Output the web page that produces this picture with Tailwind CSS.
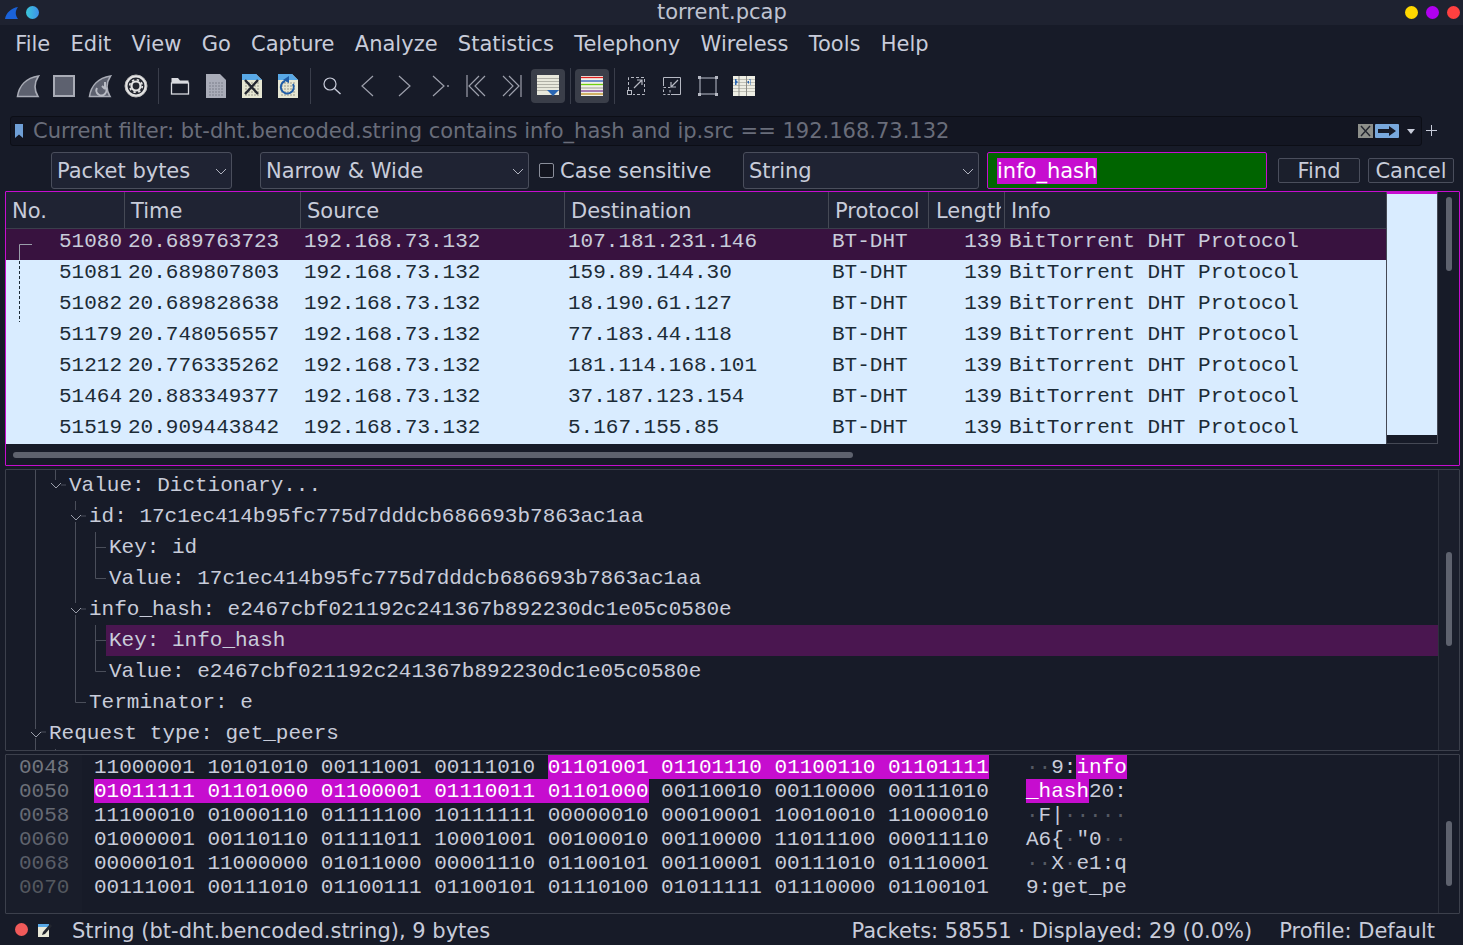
<!DOCTYPE html>
<html lang="en"><head><meta charset="utf-8"><title>torrent.pcap</title>
<script src="https://cdn.jsdelivr.net/npm/@tailwindcss/browser@4"></script></head>
<body class="m-0 w-[1463px] h-[945px] overflow-hidden bg-[#171b28] text-[#c8ccda] font-['DejaVu_Sans',sans-serif] text-[21px]">
<!-- title bar -->
<header class="relative h-[25px] flex items-center justify-between bg-[#1e2230] pl-[5px] pr-[3px]">
  <div class="flex items-center gap-[7px]">
    <svg width="14" height="14" viewBox="0 0 14 14"><path d="M0 13 C1 7 6 2 13 1 C10 5 10 9 13 13 Z" fill="#1a62d8"/></svg>
    <span class="w-[13px] h-[13px] rounded-full bg-gradient-to-r from-[#3bc7d9] to-[#3f8fe8]"></span>
  </div>
  <span class="absolute left-[657px] top-0 leading-[24px] text-[#bfc3d0]">torrent.pcap</span>
  <div class="flex items-center gap-[8px]">
    <span class="w-[13px] h-[13px] rounded-full bg-[#ffd800]"></span>
    <span class="w-[13px] h-[13px] rounded-full bg-[#b000f0]"></span>
    <span class="w-[13px] h-[13px] rounded-full bg-[#ff4040]"></span>
  </div>
</header>
<!-- menu -->
<nav class="h-[35px] flex items-center pl-[5px] pt-[3px] leading-[32px]">
  <span class="px-[10.15px]">File</span><span class="px-[10.15px]">Edit</span><span class="px-[10.15px]">View</span><span class="px-[10.15px]">Go</span><span class="px-[10.15px]">Capture</span><span class="px-[10.15px]">Analyze</span><span class="px-[10.15px]">Statistics</span><span class="px-[10.15px]">Telephony</span><span class="px-[10.15px]">Wireless</span><span class="px-[10.15px]">Tools</span><span class="px-[10.15px]">Help</span>
</nav>
<!-- toolbar -->
<div class="h-[52px] flex items-center pl-[10px]">
  <span class="w-9 h-9 flex items-center justify-center"><svg width="24" height="24" viewBox="0 0 24 24"><path d="M1.5 22.5 C3 12 10 4 22.5 2 C18 9 18 16 22 22.5 Z" fill="#5d616f" stroke="#a9acb6" stroke-width="1.6"/></svg></span>
  <span class="w-9 h-9 flex items-center justify-center"><svg width="24" height="24" viewBox="0 0 24 24"><rect x="2" y="2" width="20" height="20" fill="#5d616f" stroke="#a9acb6" stroke-width="2"/></svg></span>
  <span class="w-9 h-9 flex items-center justify-center"><svg width="24" height="24" viewBox="0 0 24 24"><path d="M1.5 22.5 C3 12 10 4 22.5 2 C18 9 18 16 22 22.5 Z" fill="#5d616f" stroke="#a9acb6" stroke-width="1.6"/><path d="M9 14 A5 5 0 1 0 17 13 M17 8 V15 M14 12 L17 15" fill="none" stroke="#b8bbc4" stroke-width="2"/></svg></span>
  <span class="w-9 h-9 flex items-center justify-center"><svg width="24" height="24" viewBox="0 0 24 24"><circle cx="12" cy="12" r="11" fill="#e4e4e4" stroke="#bbb"/><circle cx="12" cy="12" r="8.5" fill="#23262f"/><circle cx="12" cy="12" r="4.5" fill="none" stroke="#e4e4e4" stroke-width="2.2"/><circle cx="12" cy="12" r="6.3" fill="none" stroke="#e4e4e4" stroke-width="1.6" stroke-dasharray="2.4 2.55"/></svg></span>
  <span class="w-2 h-[36px] flex justify-center"><span class="w-px h-full bg-[#3a3e4b]"></span></span>
  <span class="w-9 h-9 flex items-center justify-center"><svg width="20" height="20" viewBox="0 0 20 20"><path d="M1.5 2 H8 L10 4.5 H18.5 V8 H1.5 Z" fill="#d9dbe0"/><rect x="1.5" y="7" width="17" height="11" fill="#171b28" stroke="#d9dbe0" stroke-width="1.3"/></svg></span>
  <span class="w-9 h-9 flex items-center justify-center"><svg width="20" height="24" viewBox="0 0 20 24"><path d="M0 0 H14 L20 6 V24 H0 Z" fill="#a9acb8"/><path d="M3 9 H17 M3 12 H17 M3 15 H17 M3 18 H17 M3 21 H17" stroke="#7d808c" stroke-dasharray="2 1"/></svg></span>
  <span class="w-9 h-9 flex items-center justify-center"><svg width="20" height="24" viewBox="0 0 20 24"><path d="M0 0 H14 L20 6 V24 H0 Z" fill="#e6e6d2"/><path d="M0 0 H14 L20 6 H0 Z" fill="#58a8e6"/><path d="M3 9 H17 M3 12 H17 M3 15 H17 M3 18 H17 M3 21 H17" stroke="#9a9a8c" stroke-dasharray="2 1"/><path d="M3 6 L16 20 M16 6 L3 20" stroke="#23262f" stroke-width="2.4"/></svg></span>
  <span class="w-9 h-9 flex items-center justify-center"><svg width="20" height="24" viewBox="0 0 20 24"><path d="M0 0 H14 L20 6 V24 H0 Z" fill="#e6e6d2"/><path d="M0 0 H14 L20 6 H0 Z" fill="#58a8e6"/><path d="M3 9 H17 M3 12 H17 M3 15 H17 M3 18 H17 M3 21 H17" stroke="#9a9a8c" stroke-dasharray="2 1"/><path d="M7 7 A6.5 6.5 0 1 0 15 10" fill="none" stroke="#1f5da8" stroke-width="2"/><path d="M11 2 V9 L5 6 Z" fill="#1f5da8"/></svg></span>
  <span class="w-2 h-[36px] flex justify-center"><span class="w-px h-full bg-[#3a3e4b]"></span></span>
  <span class="w-9 h-9 flex items-center justify-center"><svg width="20" height="20" viewBox="0 0 20 20"><circle cx="8" cy="8" r="6" fill="none" stroke="#c8ccda" stroke-width="1.2"/><path d="M12.5 12.5 L18.5 18" stroke="#c8ccda" stroke-width="1.4"/></svg></span>
  <span class="w-9 h-9 flex items-center justify-center"><svg width="20" height="24" viewBox="0 0 20 24"><path d="M15 2 L4 12 L15 22" fill="none" stroke="#9da0ac" stroke-width="1.2"/></svg></span>
  <span class="w-9 h-9 flex items-center justify-center"><svg width="20" height="24" viewBox="0 0 20 24"><path d="M5 2 L16 12 L5 22" fill="none" stroke="#9da0ac" stroke-width="1.2"/></svg></span>
  <span class="w-9 h-9 flex items-center justify-center"><svg width="20" height="24" viewBox="0 0 20 24"><path d="M3 2 L14 12 L3 22" fill="none" stroke="#9da0ac" stroke-width="1.2"/><circle cx="18" cy="12" r="0.9" fill="#9da0ac"/></svg></span>
  <span class="w-9 h-9 flex items-center justify-center"><svg width="20" height="24" viewBox="0 0 20 24"><path d="M1 1 V23 M13 2 L3 12 L13 22 M19 2 L9 12 L19 22" fill="none" stroke="#9da0ac" stroke-width="1.2"/></svg></span>
  <span class="w-9 h-9 flex items-center justify-center"><svg width="20" height="24" viewBox="0 0 20 24"><path d="M19 1 V23 M7 2 L17 12 L7 22 M1 2 L11 12 L1 22" fill="none" stroke="#9da0ac" stroke-width="1.2"/></svg></span>
  <span class="w-9 h-9 flex items-center justify-center"><span class="w-[34px] h-[34px] rounded-[4px] bg-[#3a3e49] flex items-center justify-center"><svg width="22" height="22" viewBox="0 0 22 22"><rect width="22" height="20" fill="#e8e8dc"/><path d="M0 3.5 H22 M0 6.5 H22 M0 9.5 H22 M0 12.5 H22 M0 15.5 H22" stroke="#b0b0a6"/><path d="M10 15 H22 L16 21 Z" fill="#2a67b4"/></svg></span></span>
  <span class="w-2 h-[36px] flex justify-center"><span class="w-px h-full bg-[#3a3e4b]"></span></span>
  <span class="w-9 h-9 flex items-center justify-center"><span class="w-[34px] h-[34px] rounded-[4px] bg-[#3a3e49] flex items-center justify-center"><svg width="22" height="20" viewBox="0 0 22 20"><rect width="22" height="20" fill="#f0f0e8"/><path d="M0 1.5 H22" stroke="#e02020" stroke-width="1.3"/><path d="M0 5 H22" stroke="#2a5cb8" stroke-width="1.3"/><path d="M0 8.5 H22" stroke="#70d010" stroke-width="1.3"/><path d="M0 12 H22" stroke="#b0b0a8" stroke-width="1.3"/><path d="M0 15 H22" stroke="#7a3a90" stroke-width="1.3"/><path d="M0 18 H22" stroke="#c09020" stroke-width="1.3"/></svg></span></span>
  <span class="w-2 h-[36px] flex justify-center"><span class="w-px h-full bg-[#3a3e4b]"></span></span>
  <span class="w-9 h-9 flex items-center justify-center"><svg width="20" height="20" viewBox="0 0 20 20" fill="none" stroke="#b6b9c3"><path d="M2.5 14 V1.5 H18.5 V18.5 H7" stroke-dasharray="3 2"/><rect x="1.5" y="14.5" width="4" height="4"/><path d="M8 12 L16 4 M11 4 H16 V9" stroke-width="1.2"/></svg></span>
  <span class="w-9 h-9 flex items-center justify-center"><svg width="20" height="20" viewBox="0 0 20 20" fill="none" stroke="#b6b9c3"><path d="M1.5 10 V1.5 H18.5 V18.5 H9"/><rect x="1.5" y="11.5" width="6.5" height="7" stroke-dasharray="2.5 2"/><path d="M16 4 L9 11 M9 6 V11 H14" stroke-width="1.2"/></svg></span>
  <span class="w-9 h-9 flex items-center justify-center"><svg width="20" height="20" viewBox="0 0 20 20"><rect x="2" y="2" width="16" height="16" fill="none" stroke="#858995" stroke-width="1.5"/><rect x="0" y="0" width="3" height="3" fill="#b6b9c3"/><rect x="17" y="0" width="3" height="3" fill="#b6b9c3"/><rect x="0" y="17" width="3" height="3" fill="#b6b9c3"/><rect x="17" y="17" width="3" height="3" fill="#b6b9c3"/></svg></span>
  <span class="w-9 h-9 flex items-center justify-center"><svg width="22" height="20" viewBox="0 0 22 20"><rect width="22" height="20" fill="#eeeee4"/><path d="M0 3.5 H22 M0 6.5 H22 M0 9.5 H22 M0 12.5 H22 M0 15.5 H22" stroke="#c0c0b6"/><path d="M6 0 V20 M13.5 0 V20" stroke="#8d8d88" stroke-width="1"/><path d="M2 3 L5 6 L2 9 Z M17 3 L14 6 L17 9 Z M2 3 H3.5 V9 H2 Z M16 3 H17.5 V9 H16 Z" fill="#2a67b4"/></svg></span>
</div>
<!-- filter -->
<div class="h-[30px] mt-[4px] ml-[10px] w-[1412px] flex items-center relative">
  <div class="w-full h-[30px] rounded-[3px] bg-[#131622] border border-[#0c0e16] flex items-center pl-[3px] pr-[6px]">
    <svg width="10" height="14" viewBox="0 0 10 14"><path d="M1 0 H9 V14 L5 10.5 L1 14 Z" fill="#6f9fd6"/></svg>
    <span class="ml-[9px] flex-1 text-[#696d7a] leading-[28px] whitespace-nowrap">Current filter: bt-dht.bencoded.string contains info_hash and ip.src == 192.168.73.132</span>
    <svg width="15" height="14" viewBox="0 0 15 14"><rect width="15" height="14" fill="#8d8f8a"/><path d="M3 2 L12 12 M12 2 L3 12" stroke="#22252e" stroke-width="1.4"/></svg>
    <span class="ml-[2px] w-[24px] h-[14px] rounded-[1px] bg-[#78a8dc] flex items-center justify-center"><svg width="18" height="10" viewBox="0 0 18 10"><path d="M0 3 H11 V0 L18 5 L11 10 V7 H0 Z" fill="#161a26"/></svg></span>
    <svg class="ml-[8px]" width="8" height="5" viewBox="0 0 8 5"><path d="M0 0 H8 L4 5 Z" fill="#c8ccda"/></svg>
  </div>
  <span class="absolute left-[1416px] top-[9px] w-[12px] h-[12px]"><svg width="11" height="11" viewBox="0 0 11 11"><path d="M5.5 0 V11 M0 5.5 H11" stroke="#c8ccda"/></svg></span>
</div>
<!-- find bar -->
<div class="h-[37px] mt-[6px] flex items-center pl-[51px]">
  <div class="w-[181px] h-[37px] rounded-[3px] bg-[#1f2333] border border-[#4a4e5c] flex items-center justify-between pl-[5px] pr-[4px] pt-[2px]"><span>Packet bytes</span><svg width="12" height="8" viewBox="0 0 12 8"><path d="M1 1 L6 6 L11 1" fill="none" stroke="#b0b3bf"/></svg></div>
  <div class="w-[269px] h-[37px] ml-[28px] rounded-[3px] bg-[#1f2333] border border-[#4a4e5c] flex items-center justify-between pl-[5px] pr-[4px] pt-[2px]"><span>Narrow &amp; Wide</span><svg width="12" height="8" viewBox="0 0 12 8"><path d="M1 1 L6 6 L11 1" fill="none" stroke="#b0b3bf"/></svg></div>
  <span class="w-[15px] h-[15px] ml-[10px] rounded-[2px] border border-[#8a8e9a] bg-[#12141e]"></span>
  <span class="ml-[6px] w-[183px] pt-[2px]">Case sensitive</span>
  <div class="w-[236px] h-[37px] rounded-[3px] bg-[#1f2333] border border-[#4a4e5c] flex items-center justify-between pl-[5px] pr-[4px] pt-[2px]"><span>String</span><svg width="12" height="8" viewBox="0 0 12 8"><path d="M1 1 L6 6 L11 1" fill="none" stroke="#b0b3bf"/></svg></div>
  <div class="w-[280px] h-[37px] ml-[8px] rounded-[2px] bg-[#006400] border border-[#c60dcf] flex items-center pl-[9px] pt-[1px]"><span class="bg-[#c60dcf] text-white leading-[26px]">info_hash</span></div>
  <span class="w-[82px] h-[25px] ml-[11px] rounded-[2px] bg-[#1b1f2c] border border-[#4a4e5c] flex items-center justify-center leading-[21px] pt-[2px]">Find</span>
  <span class="w-[86px] h-[25px] ml-[8px] rounded-[2px] bg-[#1b1f2c] border border-[#4a4e5c] flex items-center justify-center leading-[21px] pt-[2px]">Cancel</span>
</div>
<!-- packet list -->
<section class="relative h-[275px] mt-[2px] ml-[5px] w-[1455px] border border-[#c60dcf] rounded-[1px] bg-[#171b28] font-['Liberation_Mono',monospace] text-[21px]">
  <div class="flex h-[252px]">
    <div class="w-[1380px]">
      <div class="h-[37px] flex bg-[#1f2333] border-b border-[#3a3e4b] font-['DejaVu_Sans',sans-serif] text-[21px] leading-[39px]">
        <span class="w-[119px] pl-[6px] border-r border-[#454955]">No.</span>
        <span class="w-[176px] pl-[6px] border-r border-[#454955]">Time</span>
        <span class="w-[264px] pl-[6px] border-r border-[#454955]">Source</span>
        <span class="w-[264px] pl-[6px] border-r border-[#454955]">Destination</span>
        <span class="w-[100px] pl-[6px] border-r border-[#454955]">Protocol</span>
        <span class="w-[76px] pl-[7px] border-r border-[#454955]"><span class="block w-[65px] overflow-hidden whitespace-nowrap">Length</span></span>
        <span class="pl-[6px]">Info</span>
      </div>
      <div class="h-[215px] overflow-hidden bg-[#d9ecff] text-[#1c2b36]">
        <div class="h-[31px] flex leading-[26px] bg-[#38123f] text-[#c8ccda]"><span class="w-[116px] text-right">51080</span><span class="w-[176px] pl-[6px]">20.689763723</span><span class="w-[264px] pl-[6px]">192.168.73.132</span><span class="w-[264px] pl-[6px]">107.181.231.146</span><span class="w-[100px] pl-[6px]">BT-DHT</span><span class="w-[76px] text-right">139</span><span class="pl-[7px] whitespace-pre">BitTorrent DHT Protocol</span></div>
        <div class="h-[31px] flex leading-[26px]"><span class="w-[116px] text-right">51081</span><span class="w-[176px] pl-[6px]">20.689807803</span><span class="w-[264px] pl-[6px]">192.168.73.132</span><span class="w-[264px] pl-[6px]">159.89.144.30</span><span class="w-[100px] pl-[6px]">BT-DHT</span><span class="w-[76px] text-right">139</span><span class="pl-[7px] whitespace-pre">BitTorrent DHT Protocol</span></div>
        <div class="h-[31px] flex leading-[26px]"><span class="w-[116px] text-right">51082</span><span class="w-[176px] pl-[6px]">20.689828638</span><span class="w-[264px] pl-[6px]">192.168.73.132</span><span class="w-[264px] pl-[6px]">18.190.61.127</span><span class="w-[100px] pl-[6px]">BT-DHT</span><span class="w-[76px] text-right">139</span><span class="pl-[7px] whitespace-pre">BitTorrent DHT Protocol</span></div>
        <div class="h-[31px] flex leading-[26px]"><span class="w-[116px] text-right">51179</span><span class="w-[176px] pl-[6px]">20.748056557</span><span class="w-[264px] pl-[6px]">192.168.73.132</span><span class="w-[264px] pl-[6px]">77.183.44.118</span><span class="w-[100px] pl-[6px]">BT-DHT</span><span class="w-[76px] text-right">139</span><span class="pl-[7px] whitespace-pre">BitTorrent DHT Protocol</span></div>
        <div class="h-[31px] flex leading-[26px]"><span class="w-[116px] text-right">51212</span><span class="w-[176px] pl-[6px]">20.776335262</span><span class="w-[264px] pl-[6px]">192.168.73.132</span><span class="w-[264px] pl-[6px]">181.114.168.101</span><span class="w-[100px] pl-[6px]">BT-DHT</span><span class="w-[76px] text-right">139</span><span class="pl-[7px] whitespace-pre">BitTorrent DHT Protocol</span></div>
        <div class="h-[31px] flex leading-[26px]"><span class="w-[116px] text-right">51464</span><span class="w-[176px] pl-[6px]">20.883349377</span><span class="w-[264px] pl-[6px]">192.168.73.132</span><span class="w-[264px] pl-[6px]">37.187.123.154</span><span class="w-[100px] pl-[6px]">BT-DHT</span><span class="w-[76px] text-right">139</span><span class="pl-[7px] whitespace-pre">BitTorrent DHT Protocol</span></div>
        <div class="h-[31px] flex leading-[26px]"><span class="w-[116px] text-right">51519</span><span class="w-[176px] pl-[6px]">20.909443842</span><span class="w-[264px] pl-[6px]">192.168.73.132</span><span class="w-[264px] pl-[6px]">5.167.155.85</span><span class="w-[100px] pl-[6px]">BT-DHT</span><span class="w-[76px] text-right">139</span><span class="pl-[7px] whitespace-pre">BitTorrent DHT Protocol</span></div>
      </div>
    </div>
    <div class="w-[52px] h-[252px] border-l border-r border-b border-[#454955] flex flex-col">
      <div class="h-[2px] bg-[#c60dcf]"></div>
      <div class="h-[241px] bg-[#d9ecff]"></div>
    </div>
    <div class="flex-1 flex justify-center pt-[5px]"><span class="w-[6px] h-[74px] rounded-full bg-[#5e626e]"></span></div>
  </div>
  <div class="h-[21px] pt-[8px] pl-[7px]"><div class="w-[840px] h-[6px] rounded-full bg-[#5e626e]"></div></div>
  <svg class="absolute left-[10px] top-[50px]" width="20" height="82" viewBox="0 0 20 82"><path d="M16 2.5 H3.5 V18" fill="none" stroke="#9a9eaa"/><path d="M3.5 19 V80" fill="none" stroke="#1c2b36" stroke-dasharray="3 2"/></svg>
</section>
<!-- details -->
<section class="relative h-[282px] mt-[3px] ml-[5px] w-[1455px] border border-[#3c404c] rounded-[1px] flex overflow-hidden font-['Liberation_Mono',monospace] text-[21px] leading-[30px]">
  <div class="w-[1432px]">
    <div class="h-[31px] pl-[63px] pt-[1px]">Value: Dictionary...</div>
    <div class="h-[31px] pl-[83px] pt-[1px]">id: 17c1ec414b95fc775d7dddcb686693b7863ac1aa</div>
    <div class="h-[31px] pl-[103px] pt-[1px]">Key: id</div>
    <div class="h-[31px] pl-[103px] pt-[1px]">Value: 17c1ec414b95fc775d7dddcb686693b7863ac1aa</div>
    <div class="h-[31px] pl-[83px] pt-[1px]">info_hash: e2467cbf021192c241367b892230dc1e05c0580e</div>
    <div class="h-[31px] ml-[100px] pl-[3px] pt-[1px] bg-[#4a1650]">Key: info_hash</div>
    <div class="h-[31px] pl-[103px] pt-[1px]">Value: e2467cbf021192c241367b892230dc1e05c0580e</div>
    <div class="h-[31px] pl-[83px] pt-[1px]">Terminator: e</div>
    <div class="h-[31px] pl-[43px] pt-[1px]">Request type: get_peers</div>
  </div>
  <div class="flex-1 border-l border-[#2c303c] bg-[#1a1e2b] flex justify-center pt-[82px]"><span class="w-[6px] h-[94px] rounded-full bg-[#5e626e]"></span></div>
  <svg class="absolute left-0 top-0" width="110" height="282" viewBox="0 0 110 282" fill="none" stroke="#4a4e5a"><path d="M29.5 0 V259 M29.5 268 V282"/><path d="M49.5 0 V10 M55 15 H60"/><path d="M69.5 31 V40 M75 46 H80 M69.5 52 V133 M75 139 H80 M69.5 145 V232.5 H80"/><path d="M89.5 62 V108.5 H100 M89.5 77.5 H100 M89.5 155 V201.5 H100 M89.5 170.5 H100"/><path d="M35 262 H40 M49.5 279 V282"/><path d="M45 13 L50 18 L55 13 M65 45 L70 50 L75 45 M65 138 L70 143 L75 138 M25 262 L30 267 L35 262" stroke="#9a9eaa"/></svg>
</section>
<!-- bytes -->
<section class="h-[160px] mt-[3px] ml-[5px] w-[1455px] border border-[#3c404c] rounded-[1px] flex overflow-hidden font-['Liberation_Mono',monospace] text-[21px] leading-[26px]">
  <div class="w-[76px] bg-[#191d2a] pl-[13px]">
    <div class="h-6 text-[#72767f]">0048</div><div class="h-6 text-[#6c7079]">0050</div><div class="h-6 text-[#666a74]">0058</div><div class="h-6 text-[#60646e]">0060</div><div class="h-6 text-[#5a5e68]">0068</div><div class="h-6 text-[#54585f]">0070</div>
  </div>
  <div class="w-[1356px] pl-[12px]">
    <div class="h-6 flex whitespace-pre"><span class="w-[932px]">11000001 10101010 00111001 00111010 <span class="inline-block h-6 align-top bg-[#c60dcf] text-white">01101001 01101110 01100110 01101111</span></span><span><span class="text-[#555963]">··</span>9:<span class="inline-block h-6 align-top bg-[#c60dcf] text-white">info</span></span></div>
    <div class="h-6 flex whitespace-pre"><span class="w-[932px]"><span class="inline-block h-6 align-top bg-[#c60dcf] text-white">01011111 01101000 01100001 01110011 01101000</span> 00110010 00110000 00111010</span><span><span class="inline-block h-6 align-top bg-[#c60dcf] text-white">_hash</span>20:</span></div>
    <div class="h-6 flex whitespace-pre"><span class="w-[932px]">11100010 01000110 01111100 10111111 00000010 00010001 10010010 11000010</span><span><span class="text-[#555963]">·</span>F|<span class="text-[#555963]">·····</span></span></div>
    <div class="h-6 flex whitespace-pre"><span class="w-[932px]">01000001 00110110 01111011 10001001 00100010 00110000 11011100 00011110</span><span>A6{<span class="text-[#555963]">·</span>"0<span class="text-[#555963]">··</span></span></div>
    <div class="h-6 flex whitespace-pre"><span class="w-[932px]">00000101 11000000 01011000 00001110 01100101 00110001 00111010 01110001</span><span><span class="text-[#555963]">··</span>X<span class="text-[#555963]">·</span>e1:q</span></div>
    <div class="h-6 flex whitespace-pre"><span class="w-[932px]">00111001 00111010 01100111 01100101 01110100 01011111 01110000 01100101</span><span>9:get_pe</span></div>
  </div>
  <div class="flex-1 border-l border-[#2c303c] flex justify-center pt-[66px]"><span class="w-[6px] h-[65px] rounded-full bg-[#5e626e]"></span></div>
</section>
<!-- status -->
<footer class="h-[31px] flex items-center pl-[15px] pr-[28px]">
  <span class="w-[13px] h-[13px] rounded-full bg-[#f05a5a]"></span>
  <svg class="ml-[10px]" width="14" height="14" viewBox="0 0 14 14"><rect y="1" width="11" height="13" fill="#e8e8d8"/><path d="M0 1 H11 V4 H0 Z" fill="#58a8e6"/><path d="M5 9 L12 1 L14 3 L7 11 L4 12 Z" fill="#23262f"/></svg>
  <span class="ml-[20px] flex-1 leading-[27px] pt-[4px]">String (bt-dht.bencoded.string), 9 bytes</span>
  <span class="leading-[27px] pt-[4px]">Packets: 58551 · Displayed: 29 (0.0%)</span>
  <span class="ml-[27px] leading-[27px] pt-[4px]">Profile: Default</span>
</footer>
</body></html>
